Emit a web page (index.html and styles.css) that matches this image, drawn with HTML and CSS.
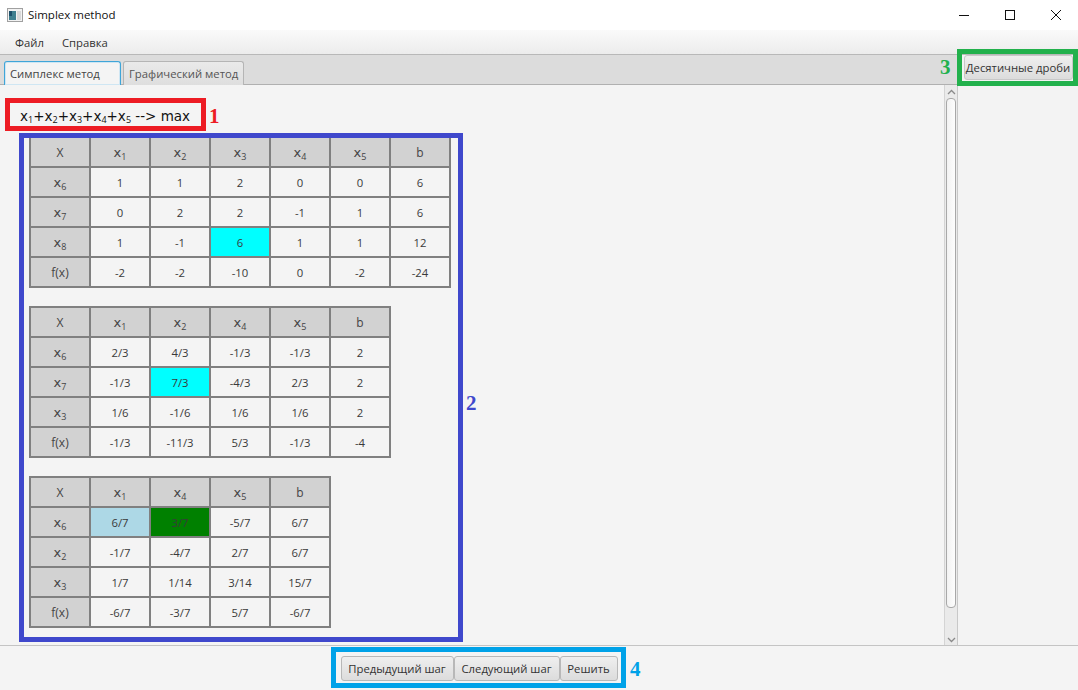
FILE: index.html
```html
<!DOCTYPE html>
<html lang="ru">
<head>
<meta charset="utf-8">
<title>Simplex method</title>
<link rel="stylesheet" href="styles.css">
</head>
<body>
<div class="window">
  <header class="titlebar">
    <svg class="app-icon" width="16" height="14" viewBox="0 0 16 14"><rect x="0.5" y="0.5" width="15" height="13" fill="#f2f2f2" stroke="#a0a0a0"/><rect x="2" y="3" width="7" height="9" fill="#3f7f8f"/><rect x="2" y="3" width="3" height="5" fill="#1d4f6a"/><rect x="10" y="3" width="4" height="9" fill="#d8d8d8"/></svg>
    <span class="title-text">Simplex method</span>
    <div class="win-controls">
      <svg width="12" height="12" viewBox="0 0 12 12"><path d="M1 6.5H11" stroke="#111" fill="none"/></svg>
      <svg width="12" height="12" viewBox="0 0 12 12"><rect x="1.5" y="1.5" width="9" height="9" stroke="#111" fill="none"/></svg>
      <svg width="12" height="12" viewBox="0 0 12 12"><path d="M1 1L11 11M11 1L1 11" stroke="#111" fill="none"/></svg>
    </div>
  </header>
  <nav class="menubar"><span>Файл</span><span>Справка</span></nav>
  <div class="workspace">
    <section class="main-pane">
      <div class="tabbar">
        <div class="tab tab-active">Симплекс метод</div>
        <div class="tab">Графический метод</div>
      </div>
      <div class="scroll-area">
        <div class="content">
          <div class="formula">x<sub>1</sub>+x<sub>2</sub>+x<sub>3</sub>+x<sub>4</sub>+x<sub>5</sub> --&gt; max</div>
          <table class="simplex">
            <tr><th class="plain">X</th><th>x<sub>1</sub></th><th>x<sub>2</sub></th><th>x<sub>3</sub></th><th>x<sub>4</sub></th><th>x<sub>5</sub></th><th class="plain">b</th></tr>
            <tr><th>x<sub>6</sub></th><td>1</td><td>1</td><td>2</td><td>0</td><td>0</td><td>6</td></tr>
            <tr><th>x<sub>7</sub></th><td>0</td><td>2</td><td>2</td><td>-1</td><td>1</td><td>6</td></tr>
            <tr><th>x<sub>8</sub></th><td>1</td><td>-1</td><td class="pivot">6</td><td>1</td><td>1</td><td>12</td></tr>
            <tr><th class="plain">f(x)</th><td>-2</td><td>-2</td><td>-10</td><td>0</td><td>-2</td><td>-24</td></tr>
          </table>
          <table class="simplex">
            <tr><th class="plain">X</th><th>x<sub>1</sub></th><th>x<sub>2</sub></th><th>x<sub>4</sub></th><th>x<sub>5</sub></th><th class="plain">b</th></tr>
            <tr><th>x<sub>6</sub></th><td>2/3</td><td>4/3</td><td>-1/3</td><td>-1/3</td><td>2</td></tr>
            <tr><th>x<sub>7</sub></th><td>-1/3</td><td class="pivot">7/3</td><td>-4/3</td><td>2/3</td><td>2</td></tr>
            <tr><th>x<sub>3</sub></th><td>1/6</td><td>-1/6</td><td>1/6</td><td>1/6</td><td>2</td></tr>
            <tr><th class="plain">f(x)</th><td>-1/3</td><td>-11/3</td><td>5/3</td><td>-1/3</td><td>-4</td></tr>
          </table>
          <table class="simplex">
            <tr><th class="plain">X</th><th>x<sub>1</sub></th><th>x<sub>4</sub></th><th>x<sub>5</sub></th><th class="plain">b</th></tr>
            <tr><th>x<sub>6</sub></th><td class="light">6/7</td><td class="green">3/7</td><td>-5/7</td><td>6/7</td></tr>
            <tr><th>x<sub>2</sub></th><td>-1/7</td><td>-4/7</td><td>2/7</td><td>6/7</td></tr>
            <tr><th>x<sub>3</sub></th><td>1/7</td><td>1/14</td><td>3/14</td><td>15/7</td></tr>
            <tr><th class="plain">f(x)</th><td>-6/7</td><td>-3/7</td><td>5/7</td><td>-6/7</td></tr>
          </table>
        </div>
        <div class="scrollbar">
          <svg width="9" height="6" viewBox="0 0 9 6"><path d="M1 5L4.5 1.5L8 5" stroke="#8a8a8a" stroke-width="1.3" fill="none"/></svg>
          <div class="thumb"></div>
          <svg width="9" height="6" viewBox="0 0 9 6"><path d="M1 1L4.5 4.5L8 1" stroke="#8a8a8a" stroke-width="1.3" fill="none"/></svg>
        </div>
      </div>
    </section>
    <aside class="side-pane"><button class="btn side-btn">Десятичные дроби</button></aside>
  </div>
  <footer class="actions">
    <button class="btn btn-prev">Предыдущий шаг</button><button class="btn btn-next">Следующий шаг</button><button class="btn btn-solve">Решить</button>
  </footer>
</div>
<div class="mark mark-red"></div><span class="num num-red">1</span>
<div class="mark mark-blue"></div><span class="num num-blue">2</span>
<div class="mark mark-green"></div><span class="num num-green">3</span>
<div class="mark mark-cyan"></div><span class="num num-cyan">4</span>
</body>
</html>
```
FILE: styles.css
```css
* { box-sizing: border-box; }
html, body { margin: 0; height: 100%; overflow: hidden; }
body { font-family: "Open Sans", "Noto Sans", sans-serif; font-size: 11.3px; color: #333; background: #f4f4f4; }
.window { width: 1078px; height: 690px; display: flex; flex-direction: column; position: relative; }
.titlebar { height: 30px; background: #fff; display: flex; align-items: center; padding: 0 0 1px 7px; color: #111; font-size: 11.5px; flex: none; }
.app-icon { margin-right: 5px; }
.win-controls { margin-left: auto; display: flex; gap: 34px; padding-right: 16px; }
.menubar { height: 25px; flex: none; background: linear-gradient(#fafafa, #ececec); border-bottom: 1px solid #b8b8b8; display: flex; align-items: center; gap: 18px; padding-left: 15px; }
.workspace { flex: 1; display: flex; min-height: 0; }
.main-pane { width: 958px; display: flex; flex-direction: column; border-right: 1px solid #c8c8c8; }
.tabbar { height: 30px; flex: none; background: #dcdcdc; border-bottom: 1px solid #b0b0b0; display: flex; align-items: flex-end; gap: 2px; padding-left: 4px; }
.tab { height: 24px; margin-bottom: -1px; padding: 0 5px; line-height: 23px; background: linear-gradient(#eaeaea, #dedede); border: 1px solid #b5b5b5; border-bottom: none; border-radius: 3px 3px 0 0; color: #555; width: 121px; white-space: nowrap; }
.tab-active { width: 117px; background: #f4f4f4; border-color: #3fa5d8; box-shadow: inset 0 0 0 1px #cfe6f3; color: #444; }
.scroll-area { flex: 1; display: flex; min-height: 0; }
.content { flex: 1; padding: 16px 0 0 29px; }
.formula { margin: 0 0 4px -9px; height: 31px; line-height: 30px; font-family: "DejaVu Sans", sans-serif; font-size: 13.5px; color: #111; white-space: nowrap; }
.formula sub { font-family: "Open Sans", sans-serif; font-size: 9px; line-height: 0; vertical-align: -2px; }
.simplex { border-collapse: collapse; table-layout: fixed; margin-bottom: 18px; }
.simplex th, .simplex td { width: 60px; height: 30px; border: 2px solid #808080; padding: 0; text-align: center; font-weight: 400; font-size: 11.3px; color: #3a3a3a; }
.simplex th { background: #d2d2d2; font-family: "DejaVu Sans", sans-serif; font-size: 13px; color: #444; }
.simplex th sub { font-family: "Open Sans", sans-serif; font-size: 9px; line-height: 0; vertical-align: -3px; }
.simplex th.plain { font-family: "Open Sans", sans-serif; font-size: 12px; }
.simplex td { background: #f4f4f4; }
.simplex td.pivot { background: #00ffff; }
.simplex td.light { background: #add8e6; }
.simplex td.green { background: #008000; }
.scrollbar { width: 13px; flex: none; background: #eaeaea; border-left: 1px solid #d4d4d4; display: flex; flex-direction: column; align-items: center; padding: 4px 0 2px; }
.thumb { width: 10px; height: 510px; margin: 3px 0 auto; background: linear-gradient(90deg, #f2f2f2, #fdfdfd); border: 1px solid #a8a8a8; border-radius: 4px; }
.side-pane { flex: 1; display: flex; flex-direction: column; align-items: center; background: #f3f3f3; }
.btn { font-family: inherit; font-size: 11.3px; color: #333; background: linear-gradient(#efefef, #dcdcdc); border: 1px solid #b8b8b8; border-radius: 3px; padding: 0; height: 25px; white-space: nowrap; }
.side-btn { width: 109px; border-color: #c8c8c8; }
.actions { height: 45px; flex: none; background: #f4f4f4; border-top: 1px solid #c4c4c4; display: flex; justify-content: center; align-items: center; padding-right: 120px; }
.btn-prev { width: 113px; }
.btn-next { width: 106px; }
.btn-solve { width: 58px; }
.mark { position: absolute; }
.mark-red { left: 5px; top: 98px; width: 201px; height: 33px; border: 5px solid #ed1c24; }
.mark-blue { left: 19px; top: 133px; width: 444px; height: 509px; border: 5px solid #3f48cc; }
.mark-green { left: 957px; top: 49px; width: 121px; height: 37px; border: 5px solid #22b14c; }
.mark-cyan { left: 331px; top: 647px; width: 295px; height: 41px; border: 5px solid #00a2e8; }
.num { position: absolute; font-family: "Liberation Serif", serif; font-weight: 700; font-size: 21px; line-height: 20px; }
.num-red { left: 209px; top: 106px; color: #ed1c24; }
.num-blue { left: 466px; top: 393px; color: #3f48cc; }
.num-green { left: 940px; top: 57px; color: #22b14c; }
.num-cyan { left: 630px; top: 659px; color: #00a2e8; }
```
